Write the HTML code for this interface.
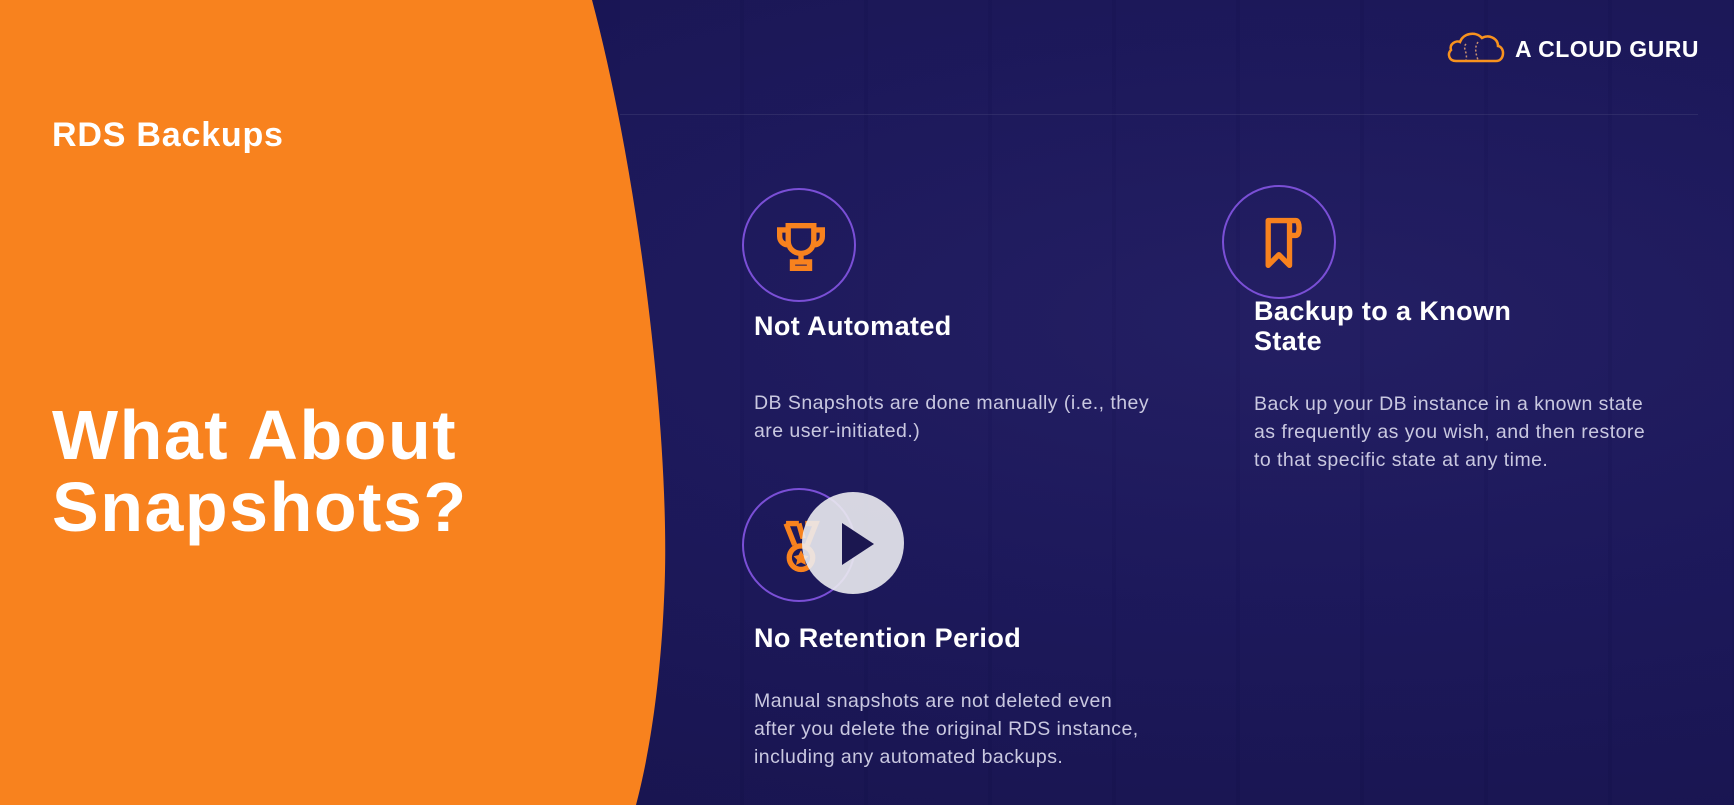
<!DOCTYPE html>
<html><head><meta charset="utf-8"><style>
*{margin:0;padding:0;box-sizing:border-box}
body{width:1734px;height:805px;overflow:hidden;position:relative;font-family:"Liberation Sans",sans-serif;
background:radial-gradient(ellipse at 75% 40%,#221d62 0%,#1b175a 40%,#15114a 100%);}
.t{position:absolute;color:#fff;font-weight:bold;white-space:nowrap}
.b{position:absolute;color:#c9c8e0;font-size:19.5px;line-height:28px;white-space:nowrap;letter-spacing:0.45px}
.c{position:absolute;width:114px;height:114px;border:2px solid #7a4fd6;border-radius:50%}
.c svg{position:absolute;left:25px;top:25px}
</style></head><body>
<div style="position:absolute;left:620px;top:0;width:1114px;height:805px;background:repeating-linear-gradient(90deg,rgba(255,255,255,0.008) 0 120px,rgba(0,0,0,0.025) 120px 124px)"></div>
<svg style="position:absolute;left:0;top:0" width="700" height="805"><path d="M0 0 H592 C640 180 672 450 664 600 C660 690 648 760 636 805 H0 Z" fill="#f8821e"/></svg>
<div class="t" style="left:52px;top:116px;font-size:34px;letter-spacing:0.8px">RDS Backups</div>
<div class="t" style="left:52px;top:399px;font-size:70px;line-height:72px;letter-spacing:1.5px">What About<br>Snapshots?</div>

<svg style="position:absolute;left:1446px;top:30px" width="60" height="34" viewBox="0 0 60 34"><path d="M10 31 C3 31 1 24 5 20 C3 14 10 10 14 12 C17 3 30 1 36 8 C42 4 52 8 52 16 C59 17 59 31 50 31 Z" fill="none" stroke="#f8921e" stroke-width="2.5"/><path d="M20 14 C16 18 22 22 20 30 M32 12 C28 18 30 24 32 30" stroke="#c89070" stroke-width="1.5" stroke-dasharray="2 2" fill="none"/></svg>
<div class="t" style="left:1515px;top:36px;font-size:23px;letter-spacing:0.5px">A CLOUD GURU</div>
<div style="position:absolute;left:620px;top:114px;width:1078px;height:1px;background:rgba(255,255,255,0.08)"></div>

<div class="c" style="left:742px;top:188px"><svg width="64" height="64" viewBox="0 0 60 60" fill="none" stroke="#f8821e" stroke-width="5"><path d="M18 10 H42 V24 C42 31 37 36 30 36 C23 36 18 31 18 24 Z M18 14 H10 V20 C10 25 14 28 18 28 M42 14 H50 V20 C50 25 46 28 42 28 M30 36 V44 M22 44 H38 V50 H22 Z"/></svg></div>
<div class="c" style="left:1222px;top:185px"><svg width="64" height="64" viewBox="0 0 60 60" fill="none" stroke="#f8821e" stroke-width="5" stroke-linejoin="round"><path d="M18 8 H38 V50 L28 40 L18 50 Z M38 8 H44 C48 8 48 22 44 22 H38"/></svg></div>
<div class="c" style="left:742px;top:488px"><svg width="64" height="64" viewBox="0 0 60 60" fill="none" stroke="#f8821e" stroke-width="5"><path d="M16 8 L24 28 M28 8 L32 22 M16 8 H28 M34 8 H44 L36 28"/><circle cx="30" cy="40" r="11"/><path d="M30 34 L32 38 L36 39 L33 42 L34 46 L30 44 L26 46 L27 42 L24 39 L28 38 Z" fill="#f8821e" stroke-width="1"/></svg></div>
<div style="position:absolute;left:802px;top:492px;width:102px;height:102px;border-radius:50%;background:rgba(235,235,240,0.9)"></div>
<svg style="position:absolute;left:840px;top:521px" width="36" height="46"><path d="M2 2 L34 23 L2 44 Z" fill="#1b1750"/></svg>

<div class="t" style="left:754px;top:311px;font-size:27px;letter-spacing:0.4px">Not Automated</div>
<div class="b" style="left:754px;top:389px">DB Snapshots are done manually (i.e., they<br>are user-initiated.)</div>
<div class="t" style="left:1254px;top:296px;font-size:27px;line-height:30px;letter-spacing:0.4px">Backup to a Known<br>State</div>
<div class="b" style="left:1254px;top:390px">Back up your DB instance in a known state<br>as frequently as you wish, and then restore<br>to that specific state at any time.</div>
<div class="t" style="left:754px;top:623px;font-size:27px;letter-spacing:0.4px">No Retention Period</div>
<div class="b" style="left:754px;top:687px">Manual snapshots are not deleted even<br>after you delete the original RDS instance,<br>including any automated backups.</div>
</body></html>
